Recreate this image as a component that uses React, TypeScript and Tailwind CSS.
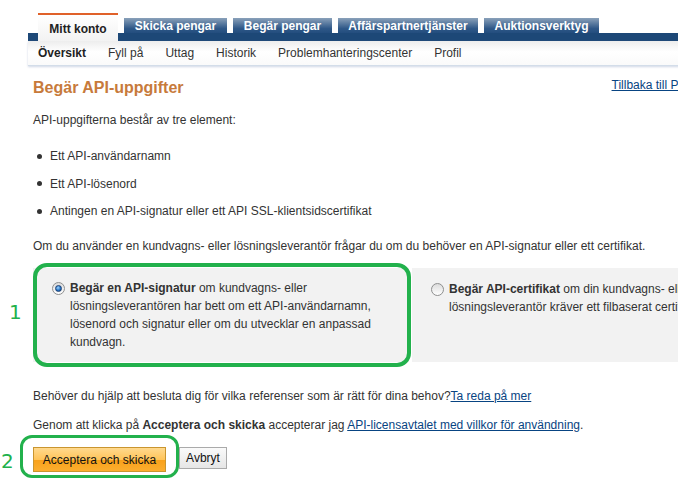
import React from "react";

const tabs = [
  { label: "Skicka pengar", w: "w-[103px]" },
  { label: "Begär pengar", w: "w-[99px]" },
  { label: "Affärspartnertjänster", w: "w-[140px]" },
  { label: "Auktionsverktyg", w: "w-[115px]" },
];

function Radio({ checked }: { checked?: boolean }) {
  return (
    <span className="mt-[3px] flex h-[13px] w-[13px] shrink-0 items-center justify-center rounded-full border border-[#8e8f8f] bg-[linear-gradient(to_bottom,#dcdcdc,#ffffff)]">
      {checked && (
        <span className="h-[7px] w-[7px] rounded-full border border-[#1c3f73] bg-[radial-gradient(circle_at_40%_35%,#9fd3ff,#1f6fc0_60%,#123f7a)]" />
      )}
    </span>
  );
}

export default function App() {
  return (
    <div className="relative h-[478px] w-[678px] overflow-hidden bg-white font-['Liberation_Sans',Arial,sans-serif] text-[12px] text-[#333]">
      {/* Header */}
      <div className="ml-[28px] w-[720px] pt-[13px]">
        <div className="flex items-end gap-[6px] bg-[linear-gradient(to_bottom,transparent_20px,#1d4877_20px)] pl-[10px]">
          <div className="flex h-[28px] w-[80px] items-center justify-center border-t-[2px] border-[#e0612a] bg-[linear-gradient(to_bottom,#ffffff,#f2f2f2)] pt-[1px] text-[12px] font-bold text-[#222]">
            Mitt konto
          </div>
          {tabs.map((t) => (
            <div
              key={t.label}
              className={`${t.w} mb-[8px] flex h-[15px] items-center justify-center bg-[linear-gradient(to_bottom,#8aa1ba,#2f5888_70%,#234d7e)] text-[12px] font-bold text-white`}
            >
              {t.label}
            </div>
          ))}
        </div>
        <div className="flex h-[25px] items-center border-b border-[#d3dde9] bg-[linear-gradient(to_bottom,#ededed,#ffffff_45%,#fafafa)] pl-[10px] text-[12px] text-[#333] shadow-[0_1px_2px_rgba(120,140,180,0.35)]">
          <span className="font-bold text-[#222]">Översikt</span>
          <span className="ml-[22px]">Fyll på</span>
          <span className="ml-[22px]">Uttag</span>
          <span className="ml-[22px]">Historik</span>
          <span className="ml-[22px]">Problemhanteringscenter</span>
          <span className="ml-[22px]">Profil</span>
        </div>
      </div>

      {/* Main */}
      <div className="w-[760px] pl-[33px]">
        <div className="mt-[12px] flex items-start">
          <h1 className="text-[16px] font-bold leading-[20px] text-[#c77a3b]">Begär API-uppgifter</h1>
          <a className="ml-[428px] mt-[-2px] text-[12px] leading-[18px] text-[#084482] underline">
            Tillbaka till Profil
          </a>
        </div>

        <p className="mt-[13px] leading-[18px]">API-uppgifterna består av tre element:</p>

        <ul className="mt-[18px] flex flex-col gap-[9.5px] pl-[4px]">
          {["Ett API-användarnamn", "Ett API-lösenord", "Antingen en API-signatur eller ett API SSL-klientsidscertifikat"].map((s) => (
            <li key={s} className="flex items-center leading-[18px]">
              <span className="mr-[8px] h-[5px] w-[5px] rounded-full bg-[#333]" />
              {s}
            </li>
          ))}
        </ul>

        <p className="mt-[17px] leading-[18px]">
          Om du använder en kundvagns- eller lösningsleverantör frågar du om du behöver en API-signatur eller ett certifikat.
        </p>

        <div className="mt-[13px] flex gap-[3px]">
          <div className="flex h-[94px] w-[376px] gap-[5px] bg-[#f2f2f2] pl-[19px] pt-[11px]">
            <Radio checked />
            <p className="w-[325px] leading-[18px]">
              <b>Begär en API-signatur</b> om kundvagns- eller lösningsleverantören har bett om ett API-användarnamn, lösenord och signatur eller om du utvecklar en anpassad kundvagn.
            </p>
          </div>
          <div className="flex h-[94px] w-[340px] gap-[5px] bg-[#f2f2f2] pl-[19px] pt-[12px]">
            <Radio />
            <p className="w-[262px] leading-[18px]">
              <b>Begär API-certifikat</b> om din kundvagns- eller lösningsleverantör kräver ett filbaserat certifikat.
            </p>
          </div>
        </div>

        <p className="mt-[25px] leading-[18px]">
          Behöver du hjälp att besluta dig för vilka referenser som är rätt för dina behov?
          <a className="text-[#084482] underline">Ta reda på mer</a>
        </p>

        <p className="mt-[11px] leading-[18px]">
          Genom att klicka på <b>Acceptera och skicka</b> accepterar jag{" "}
          <a className="text-[#084482] underline">API-licensavtalet med villkor för användning</a>.
        </p>

        <div className="mt-[13px] flex items-start gap-[13px]">
          <button className="flex h-[25px] w-[133px] items-center justify-center border border-[#c9952f] bg-[linear-gradient(to_bottom,#ffd98e,#ffc45a_50%,#f9a11a_52%,#fbae2f)] text-[12px] text-[#111]">
            Acceptera och skicka
          </button>
          <button className="flex h-[22px] w-[48px] items-center justify-center border border-[#aaaaaa] bg-[linear-gradient(to_bottom,#fafafa,#e6e6e6)] text-[12px] text-[#111]">
            Avbryt
          </button>
        </div>
      </div>

      {/* Annotations */}
      <div className="pointer-events-none absolute left-[33px] top-[263px] h-[104px] w-[378px] rounded-[14px] border-[4px] border-[#22b14c]" />
      <div className="pointer-events-none absolute left-[20px] top-[435px] h-[43px] w-[159px] rounded-[12px] border-[3px] border-[#22b14c]" />
      <span className="absolute left-[9px] top-[300px] font-['DejaVu_Sans',sans-serif] text-[20px] leading-[24px] text-[#22b14c]">1</span>
      <span className="absolute left-[1px] top-[449px] font-['DejaVu_Sans',sans-serif] text-[20px] leading-[24px] text-[#22b14c]">2</span>
    </div>
  );
}
